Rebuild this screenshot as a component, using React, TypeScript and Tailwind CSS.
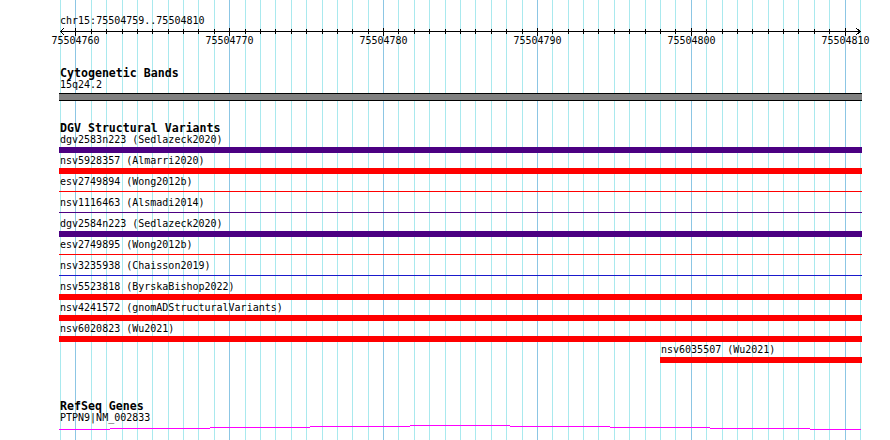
import React from "react";

const START = 75504759;
const END = 75504810;
const LEFT = 60;
const SPAN = 800;
const BP = END - START + 1;
const pxPer = SPAN / BP;

const gridX = Array.from({ length: BP + 1 }, (_, k) => ({
  x: Math.round(LEFT + k * pxPer),
  major: (START + k) % 10 === 0,
  pos: START + k,
}));

const MINOR = "#a9e9ee";
const MAJOR = "#8cc6e4";

interface Variant {
  name: string;
  color: string;
  thin?: boolean;
  offset?: number;
  width?: number;
}

const variants: Variant[] = [
  { name: "dgv2583n223 (Sedlazeck2020)", color: "#4b0082" },
  { name: "nsv5928357 (Almarri2020)", color: "#ff0000" },
  { name: "esv2749894 (Wong2012b)", color: "#ff0000", thin: true },
  { name: "nsv1116463 (Alsmadi2014)", color: "#4b0082", thin: true },
  { name: "dgv2584n223 (Sedlazeck2020)", color: "#4b0082" },
  { name: "esv2749895 (Wong2012b)", color: "#ff0000", thin: true },
  { name: "nsv3235938 (Chaisson2019)", color: "#1a1acc", thin: true },
  { name: "nsv5523818 (ByrskaBishop2022)", color: "#ff0000" },
  { name: "nsv4241572 (gnomADStructuralVariants)", color: "#ff0000" },
  { name: "nsv6020823 (Wu2021)", color: "#ff0000" },
  { name: "nsv6035507 (Wu2021)", color: "#ff0000", offset: 601, width: 202 },
];

// intron "hat" line of the gene model, drawn as raster steps
const intronSteps = [
  { x1: 59, x2: 110, y: 6 },
  { x1: 110, x2: 210, y: 5 },
  { x1: 210, x2: 310, y: 4 },
  { x1: 310, x2: 410, y: 3 },
  { x1: 410, x2: 510, y: 2 },
  { x1: 510, x2: 610, y: 3 },
  { x1: 610, x2: 710, y: 4 },
  { x1: 710, x2: 810, y: 5 },
  { x1: 810, x2: 861, y: 6 },
];

export default function App() {
  return (
    <div className="relative w-[890px] h-[440px] overflow-hidden bg-white text-black font-['DejaVu_Sans_Mono',monospace]">
      <GridLines />

      <div className="relative flex flex-col pt-[15px]">
        <div className="pl-[60px] h-[12px] text-[10px] leading-[12px] whitespace-nowrap">
          chr15:{START}..{END}
        </div>
        <Ruler />

        <TrackTitle className="mt-[20px]">Cytogenetic Bands</TrackTitle>
        <div className="pl-[60px] h-[12px] text-[10px] leading-[12px]">15q24.2</div>
        <div className="ml-[59px] mt-[2px] w-[803px] h-[8px] bg-[#808080] border-y border-black" />

        <TrackTitle className="mt-[21px]">DGV Structural Variants</TrackTitle>
        <div className="flex flex-col">
          {variants.map((v) => (
            <VariantRow key={v.name} v={v} />
          ))}
        </div>

        <div className="mt-[36px] pl-[60px] h-[11px] text-[11.6px] leading-[11px] font-bold whitespace-nowrap">
          RefSeq Genes
        </div>
        <div className="mt-[1px] pl-[60px] h-[10px] text-[10px] leading-[10px] whitespace-nowrap">PTPN9|NM_002833</div>
        <svg width={890} height={8} className="block">
          {intronSteps.map((s, i) => (
            <rect key={i} x={s.x1} y={s.y} width={s.x2 - s.x1} height={1} fill="#ff00ff" />
          ))}
        </svg>
      </div>
    </div>
  );
}

function GridLines() {
  return (
    <svg width={890} height={440} className="absolute inset-0" shapeRendering="crispEdges">
      {gridX.map((g) => (
        <rect key={g.pos} x={g.x} y={0} width={1} height={440} fill={g.major ? MAJOR : MINOR} />
      ))}
    </svg>
  );
}

function Ruler() {
  return (
    <svg width={890} height={20} className="block" shapeRendering="crispEdges">
      <rect x={60} y={4} width={801} height={1} fill="#000" />
      {gridX.slice(1, -1).map((g) =>
        g.major ? (
          <rect key={g.pos} x={g.x} y={1} width={1} height={8} fill="#000" />
        ) : (
          <rect key={g.pos} x={g.x} y={2} width={1} height={5} fill="#000" />
        )
      )}
      <polyline points="64,1 60.5,4.5 64,8" fill="none" stroke="#000" strokeWidth={1} />
      <polyline points="856,1 860.5,4.5 856,8" fill="none" stroke="#000" strokeWidth={1} />
      {gridX
        .filter((g) => g.major)
        .map((g) => (
          <text
            key={g.pos}
            x={g.x + 0.5}
            y={17}
            textAnchor="middle"
            fontSize={10}
            fontFamily="'DejaVu Sans Mono', monospace"
            fill="#000"
          >
            {g.pos}
          </text>
        ))}
    </svg>
  );
}

function TrackTitle({ children, className = "" }: { children: React.ReactNode; className?: string }) {
  return (
    <div className={`pl-[60px] h-[12px] text-[11.6px] leading-[12px] font-bold whitespace-nowrap ${className}`}>
      {children}
    </div>
  );
}

function VariantRow({ v }: { v: Variant }) {
  const offset = v.offset ?? 0;
  const width = v.width ?? 803;
  return (
    <div className="h-[21px] flex flex-col" style={{ marginLeft: 59 + offset }}>
      <div className="pl-[1px] h-[12px] text-[10px] leading-[12px] whitespace-nowrap">{v.name}</div>
      <div className="h-[9px]">
        {v.thin ? (
          <div className="mt-[3px] h-[1px]" style={{ width, backgroundColor: v.color }} />
        ) : (
          <div className="mt-[1px] h-[6px]" style={{ width, backgroundColor: v.color }} />
        )}
      </div>
    </div>
  );
}
